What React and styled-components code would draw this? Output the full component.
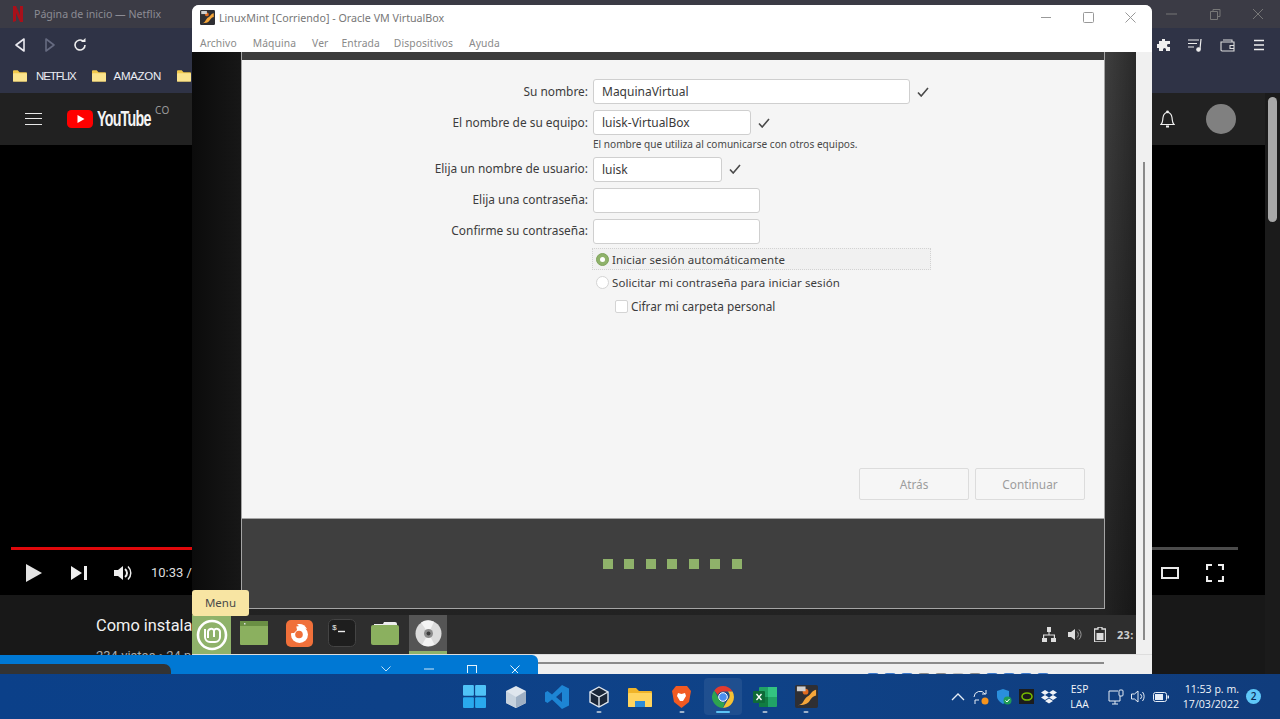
import React from 'react'
import styled, { createGlobalStyle } from 'styled-components'

const GlobalStyle = createGlobalStyle`
  html, body { margin: 0; padding: 0; width: 1280px; height: 719px; overflow: hidden; background: #181818; }
  * { box-sizing: border-box; }
  svg { display: block; flex-shrink: 0; }
`

const Screen = styled.div`
  position: relative;
  width: 1280px;
  height: 719px;
  overflow: hidden;
  display: flex;
  flex-direction: column;
  font-family: "Noto Sans", sans-serif;
`

/* ---------- browser behind the windows ---------- */
const Browser = styled.div`
  flex: 1;
  min-height: 0;
  display: flex;
  flex-direction: column;
`
const BrowserTitle = styled.div`
  height: 28px;
  background: #3b3b45;
  display: flex;
  align-items: center;
  padding: 0 0 0 13px;
  gap: 11px;
  color: #8c8c94;
  font-size: 10.6px;
`
const BrowserControls = styled.div`
  margin-left: auto;
  display: flex;
  gap: 27px;
  padding-right: 14px;
  align-items: center;
`
const Toolbar = styled.div`
  height: 65px;
  background: #2f3346;
  display: flex;
  flex-direction: column;
`
const NavRow = styled.div`
  height: 34px;
  display: flex;
  align-items: center;
  padding: 0 14px 0 13px;
  gap: 16px;
`
const NavEnd = styled.div`
  margin-left: auto;
  display: flex;
  align-items: center;
  gap: 17px;
`
const BookmarkRow = styled.div`
  height: 31px;
  display: flex;
  align-items: center;
  padding: 0 0 4px 13px;
  gap: 16px;
`
const Bookmark = styled.div`
  display: flex;
  align-items: center;
  gap: ${p => p.$gap || 8}px;
  color: #eceef4;
  font-family: "Liberation Sans", sans-serif;
  font-size: 11.5px;
  letter-spacing: ${p => p.$spacing || 0}px;
`
const PageRow = styled.div`
  flex: 1;
  min-height: 0;
  display: flex;
`
const PageMain = styled.div`
  flex: 1;
  min-width: 0;
  display: flex;
  flex-direction: column;
  background: #181818;
`
const PageScroll = styled.div`
  width: 15px;
  background: #1b1b1b;
  padding: 4px 3px 0;
`
const ScrollThumb = styled.div`
  height: 125px;
  border-radius: 5px;
  background: #a8a8a8;
`
const YtHeader = styled.div`
  height: 52px;
  background: #212121;
  display: flex;
  align-items: center;
  padding: 0 29px 0 25px;
`
const Burger = styled.div`
  width: 17px;
  height: 12px;
  border-top: 1px solid #e8e8e8;
  border-bottom: 1px solid #e8e8e8;
  position: relative;
  margin-right: 25px;
  &::after {
    content: "";
    position: absolute;
    left: 0;
    right: 0;
    top: 4px;
    height: 1px;
    background: #e8e8e8;
  }
`
const YtWord = styled.span`
  display: inline-block;
  margin-left: 4px;
  color: #f4f4f4;
  font-family: "Liberation Sans", sans-serif;
  font-size: 22px;
  font-weight: 700;
  letter-spacing: -1.2px;
  transform: scaleX(0.65);
  transform-origin: left center;
  width: 58px;
  white-space: nowrap;
`
const YtRegion = styled.span`
  align-self: flex-start;
  margin: 10px 0 0 0;
  color: #9b9b9b;
  font-size: 10px;
  letter-spacing: 0.5px;
  line-height: 14px;
`
const YtEnd = styled.div`
  margin-left: auto;
  display: flex;
  align-items: center;
  gap: 31px;
`
const Avatar = styled.div`
  width: 30px;
  height: 30px;
  border-radius: 50%;
  background: #808080;
`
const Video = styled.div`
  height: 450px;
  background: #000;
  display: flex;
  flex-direction: column;
  justify-content: flex-end;
  padding: 0 27px 0 11px;
`
const Progress = styled.div`
  height: 3px;
  background: #4b4b4b;
  margin-bottom: 5px;
`
const ProgressFill = styled.div`
  height: 100%;
  background: #e0080b;
`
const VideoControls = styled.div`
  height: 35px;
  margin-bottom: 5px;
  display: flex;
  align-items: center;
  padding-left: 15px;
  color: #dedede;
  font-family: "Roboto", sans-serif;
  font-size: 13px;
`
const VideoEnd = styled.div`
  margin-left: auto;
  display: flex;
  gap: 27px;
  align-items: center;
  padding-right: 14px;
`
const VideoInfo = styled.div`
  padding: 20px 0 0 96px;
  font-family: "Roboto", sans-serif;
`
const VideoTitle = styled.div`
  color: #f1f1f1;
  font-size: 16.4px;
  line-height: 22px;
`
const VideoMeta = styled.div`
  margin-top: 11px;
  color: #aaa;
  font-size: 13px;
  line-height: 16px;
`

/* ---------- windows, free on the desktop ---------- */
const VBoxWindow = styled.div`
  position: absolute;
  left: 192px;
  top: 5px;
  width: 960px;
  height: 669px;
  background: #f0f0f0;
  border-radius: 7px 7px 0 0;
  overflow: hidden;
  display: flex;
  flex-direction: column;
`
const VBoxTitle = styled.div`
  height: 25px;
  background: #fff;
  display: flex;
  align-items: center;
  padding: 0 16px 0 8px;
  gap: 4px;
  color: #777;
  font-size: 10.7px;
`
const VBoxControls = styled.div`
  margin-left: auto;
  display: flex;
  align-items: center;
  gap: 31px;
`
const VBoxMenu = styled.div`
  height: 22px;
  background: #fff;
  display: flex;
  align-items: center;
  padding: 4px 0 0 8px;
  gap: 16px;
  color: #8a8a8a;
  font-size: 10.3px;
`
const MenuItem = styled.span`
  letter-spacing: 0.1px;
  margin-right: ${p => p.$pull || 0}px;
`
const GuestRow = styled.div`
  height: 602px;
  display: flex;
`
const Guest = styled.div`
  width: 944px;
  display: flex;
  flex-direction: column;
  background: #0c0c0c;
`
const GuestDesk = styled.div`
  height: 563px;
  padding-left: 49px;
  background:
    linear-gradient(90deg, #0b0b0b 0, #171717 49px, transparent 49px),
    linear-gradient(90deg, rgba(0,0,0,0) 913px, rgba(0,0,0,0.35) 944px),
    linear-gradient(180deg, #3f3f3f 0, #222 100%);
`
const Installer = styled.div`
  width: 864px;
  height: 557px;
  display: flex;
  flex-direction: column;
  border: 1px solid #a5a5a5;
  border-top: 0;
`
const InstallerStrip = styled.div`
  height: 8px;
  background: #3c3c3c;
`
const InstallerBody = styled.div`
  flex: 1;
  background: #f5f5f5;
  display: flex;
  flex-direction: column;
  padding-top: 19px;
  border-bottom: 1px solid #a5a5a5;
  color: #3c3c3c;
  font-size: 11.5px;
`
const Form = styled.div`
  display: grid;
  grid-template-columns: 346px auto;
  column-gap: 5px;
  row-gap: 6px;
  justify-content: start;
`
const FieldLabel = styled.div`
  text-align: right;
  align-self: center;
  padding-bottom: 2px;
  font-size: 11.9px;
`
const FieldRow = styled.div`
  display: flex;
  align-items: center;
  gap: 7px;
`
const TextField = styled.div`
  width: ${p => p.$width}px;
  height: 25px;
  background: #fff;
  border: 1px solid #cfcfcf;
  border-radius: 3px;
  padding-left: 8px;
  line-height: 24px;
  color: #3a3a3a;
  font-size: 12px;
`
const Hint = styled.div`
  grid-column: 2;
  font-size: 10.1px;
  line-height: 11px;
  margin: -2px 0 0.5px;
  color: #484848;
`
const RadioBox = styled.div`
  grid-column: 2;
  width: 339px;
  height: 22px;
  margin: ${p => (p.$focused ? '-1.5px' : '-5px')} 0 0 -1px;
  display: flex;
  align-items: center;
  gap: 3px;
  padding-left: 3px;
  border: 1px dotted ${p => (p.$focused ? '#d2d2d2' : 'transparent')};
  background: ${p => (p.$focused ? '#f1f1f1' : 'transparent')};
  letter-spacing: 0.1px;
`
const Radio = styled.span`
  width: 13px;
  height: 13px;
  border-radius: 50%;
  background: ${p => (p.$on ? '#8fb26a' : '#fff')};
  border: 1px solid ${p => (p.$on ? '#7fa35c' : '#d4d4d4')};
  position: relative;
  &::after {
    content: "";
    display: ${p => (p.$on ? 'block' : 'none')};
    position: absolute;
    left: 3px;
    top: 3px;
    width: 5px;
    height: 5px;
    border-radius: 50%;
    background: #fff;
  }
`
const CheckRow = styled.div`
  grid-column: 2;
  display: flex;
  align-items: center;
  gap: 3px;
  padding-left: 22px;
  height: 14px;
  font-size: 11.8px;
`
const CheckBox = styled.span`
  width: 13px;
  height: 13px;
  background: #fff;
  border: 1px solid #d4d4d4;
  border-radius: 2px;
`
const InstallerButtons = styled.div`
  margin-top: auto;
  display: flex;
  justify-content: flex-end;
  gap: 6px;
  padding: 0 19px 18px 0;
`
const WizardButton = styled.div`
  width: 110px;
  height: 32px;
  border: 1px solid #dcdcdc;
  border-radius: 2px;
  background: #f6f6f6;
  color: #9d9d9d;
  display: flex;
  align-items: center;
  justify-content: center;
  font-size: 11.8px;
`
const InstallerFooter = styled.div`
  height: 89px;
  background: #3f3f3f;
  display: flex;
  align-items: center;
  justify-content: center;
  gap: 11.5px;
  padding-right: 2px;
`
const Dot = styled.span`
  width: 10px;
  height: 10px;
  background: #8fb26a;
`
const MintPanel = styled.div`
  height: 39px;
  background: #2e2e2e;
  display: flex;
  color: #cfcfcf;
`
const MintMenu = styled.div`
  width: 39px;
  background: #8fb26a;
  display: flex;
  align-items: center;
  justify-content: center;
`
const PanelIcons = styled.div`
  display: flex;
  align-items: center;
  padding-left: 2px;
`
const PanelIcon = styled.div`
  width: ${p => p.$w}px;
  height: 39px;
  display: flex;
  align-items: center;
  justify-content: center;
  background: ${p => (p.$active ? '#555' : 'transparent')};
  border-bottom: 3px solid ${p => (p.$active ? '#8fb26a' : 'transparent')};
`
const PanelTray = styled.div`
  margin-left: auto;
  display: flex;
  align-items: center;
  gap: 11px;
  font-size: 11px;
  font-weight: 700;
  letter-spacing: 0.3px;
  width: 94px;
  white-space: nowrap;
`
const Tooltip = styled.div`
  position: absolute;
  left: 0;
  top: 585px;
  width: 57px;
  height: 26px;
  padding-bottom: 1px;
  background: #f8e5a3;
  border-radius: 3px;
  color: #4a4a4a;
  font-size: 11.5px;
  display: flex;
  align-items: center;
  justify-content: center;
`
const SideStrip = styled.div`
  flex: 1;
  background: #f0f0f0;
  padding: 110px 0 14px 7px;
`
const SideBar = styled.div`
  width: 2px;
  height: 100%;
  background: #8a8a8a;
`
const VBoxStatus = styled.div`
  flex: 1;
  background: #efefef;
  padding-top: 6.5px;
  overflow: hidden;
  border-top: 1px solid #ddd;
`
const StatusLine = styled.div`
  width: 912px;
  height: 2px;
  background: #8a8a8a;
`
const StatusIcons = styled.div`
  display: flex;
  gap: 5px;
  padding: 9px 0 0 675px;
`
const StatusIcon = styled.span`
  width: 12px;
  height: 10px;
  border-radius: 3px 3px 0 0;
  background: ${p => p.$color};
`
const BlueWindow = styled.div`
  position: absolute;
  left: 0;
  top: 655px;
  width: 538px;
  height: 19px;
  background: #0078d4;
  border-radius: 0 6px 0 0;
  display: flex;
  align-items: flex-end;
`
const BlueTab = styled.div`
  width: 171px;
  height: 10px;
  background: #333;
  border-radius: 0 7px 0 0;
`
const BlueControls = styled.div`
  margin-left: auto;
  display: flex;
  align-items: center;
  gap: 33px;
  padding: 8px 18px 0 0;
  height: 19px;
`

/* ---------- windows taskbar ---------- */
const Taskbar = styled.div`
  height: 45px;
  background: linear-gradient(90deg, #0b4089 0, #0f4287 60%, #103c7c 100%);
  display: grid;
  grid-template-columns: 1fr auto 1fr;
  align-items: center;
`
const TaskApps = styled.div`
  grid-column: 2;
  display: flex;
  align-items: center;
  gap: 3.5px;
`
const TaskApp = styled.div`
  position: relative;
  width: 38px;
  height: 37px;
  border-radius: 4px;
  display: flex;
  align-items: center;
  justify-content: center;
  background: ${p => (p.$active ? 'rgba(255,255,255,0.07)' : 'transparent')};
  &::after {
    content: "";
    display: ${p => (p.$open || p.$active ? 'block' : 'none')};
    position: absolute;
    bottom: 2px;
    left: 50%;
    transform: translateX(-50%);
    width: ${p => (p.$active ? 14 : 5)}px;
    height: 2.5px;
    border-radius: 2px;
    background: ${p => (p.$active ? '#5cc4f5' : '#9fb3cc')};
  }
`
const Tray = styled.div`
  grid-column: 3;
  justify-self: end;
  display: flex;
  align-items: center;
  color: #f2f5fa;
  font-family: "Open Sans", sans-serif;
  font-size: 10.3px;
  padding-right: 19px;
`
const TrayIcons = styled.div`
  display: flex;
  align-items: center;
  gap: 7px;
`
const Lang = styled.div`
  margin: 0 19px 0 13px;
  padding-top: 1px;
  text-align: center;
  line-height: 15px;
`
const Clock = styled.div`
  margin: 0 7px 0 14px;
  padding-top: 1px;
  text-align: right;
  line-height: 15px;
  white-space: nowrap;
  font-size: 10.6px;
`
const Badge = styled.div`
  width: 15px;
  height: 15px;
  border-radius: 50%;
  background: #5fc8f8;
  color: #0b2a55;
  font-size: 10px;
  font-weight: 600;
  text-align: center;
  line-height: 15px;
`

/* ---------- drawings ---------- */
const FolderIcon = () => (
  <svg width="14" height="13" viewBox="0 0 15 13">
    <path d="M0 2a1 1 0 0 1 1-1h4l2 2h7a1 1 0 0 1 1 1v8a1 1 0 0 1-1 1H1a1 1 0 0 1-1-1z" fill="#f2c94c" />
    <rect y="4" width="15" height="9" rx="1" fill="#fbe48e" />
  </svg>
)
const Chevron = ({ dir, color }) => (
  <svg width="14" height="16" viewBox="0 0 14 16">
    <path d={dir === 'left' ? 'M11 2 3 8l8 6z' : 'M3 2l8 6-8 6z'} fill="none" stroke={color} strokeWidth="1.6" strokeLinejoin="round" />
  </svg>
)
const Check = () => (
  <svg width="12" height="10" viewBox="0 0 12 10">
    <path d="M1 5.5 4.2 9 11 1" fill="none" stroke="#4a4a4a" strokeWidth="1.6" />
  </svg>
)
const MintLogo = ({ size = 32 }) => (
  <svg width={size} height={size} viewBox="0 0 32 32" fill="none" stroke="#fff">
    <circle cx="16" cy="16" r="14" strokeWidth="2.6" />
    <path d="M9 10v8a5 5 0 0 0 5 5h5a5 5 0 0 0 5-5v-5a3.2 3.2 0 0 0-6-1.5 3.2 3.2 0 0 0-6 1.5v6" strokeWidth="2" />
    <path d="M18 12v6" strokeWidth="2" />
  </svg>
)
const CdIcon = () => (
  <svg width="27" height="27" viewBox="0 0 27 27">
    <circle cx="13.5" cy="13.5" r="13" fill="#dcdcdc" />
    <path d="M13.5 13.5 6 2.5A13 13 0 0 1 19 1.7zM13.5 13.5l6 11A13 13 0 0 1 7 24.7z" fill="#f4f4f4" />
    <circle cx="13.5" cy="13.5" r="4.5" fill="#8c8c8c" />
    <circle cx="13.5" cy="13.5" r="2" fill="#3c3c3c" />
  </svg>
)
const VBoxAppIcon = ({ size = 15 }) => (
  <svg width={size} height={size} viewBox="0 0 24 24">
    <rect width="24" height="24" rx="2" fill="#2f2f33" />
    <path d="M3 21c6 0 6-7 10-9s4-6 9-7v6c-4 1-5 3-7 6s-6 4-12 4z" fill="#f5a63a" />
    <circle cx="11" cy="7" r="3" fill="#e26b1f" />
    <rect x="2" y="1.5" width="9" height="5" fill="#cfcfcf" />
  </svg>
)
const WinIcon = () => (
  <svg width="23" height="23" viewBox="0 0 22 22">
    <rect width="10.4" height="10.4" rx="1" fill="#4fc3f7" />
    <rect x="11.6" width="10.4" height="10.4" rx="1" fill="#4fc3f7" />
    <rect y="11.6" width="10.4" height="10.4" rx="1" fill="#29a9ee" />
    <rect x="11.6" y="11.6" width="10.4" height="10.4" rx="1" fill="#29a9ee" />
  </svg>
)

const App = () => (
  <Screen>
    <GlobalStyle />
    <Browser>
      <BrowserTitle>
        <svg width="10" height="16" viewBox="0 0 10 16">
          <path d="M0 0h3l7 16H7zM0 0h3v15l-3 1zM7 0h3v16l-3-1z" fill="#a8101a" />
        </svg>
        Página de inicio — Netflix
        <BrowserControls>
          <svg width="16" height="12" viewBox="0 0 16 12"><path d="M2 6h11" stroke="#777" strokeWidth="1" /></svg>
          <svg width="16" height="12" viewBox="0 0 16 12" fill="none" stroke="#777"><path d="M3.5 3.5h7v8h-7zM6 3.5v-2h7v7h-2.5" /></svg>
          <svg width="16" height="12" viewBox="0 0 16 12"><path d="M3 1l10 10M13 1 3 11" stroke="#777" /></svg>
        </BrowserControls>
      </BrowserTitle>
      <Toolbar>
        <NavRow>
          <Chevron dir="left" color="#e9e9ef" />
          <Chevron dir="right" color="#666b80" />
          <svg width="14" height="14" viewBox="0 0 14 14" fill="none"><path d="M12 7a5 5 0 1 1-2-4" stroke="#eee" strokeWidth="1.6" /><path d="M8 4h4.5V0z" fill="#eee" /></svg>
          <NavEnd>
            <svg width="14" height="14" viewBox="0 0 14 14"><path d="M5 1h3v2h5v3h-2a1.6 1.6 0 0 0 0 3h2v4H9v-1.5a1.5 1.5 0 0 0-3 0V13H2v-3H0V6h2V3h3z" fill="#eee" /></svg>
            <svg width="15" height="14" viewBox="0 0 15 14" fill="none" stroke="#eee" strokeWidth="1.2"><path d="M0 2h11M0 5.5h9M0 9h6M13 1l-1 10" /><circle cx="10.5" cy="11.5" r="1.7" fill="#eee" /></svg>
            <svg width="15" height="13" viewBox="0 0 15 13" fill="none" stroke="#ddd" strokeWidth="1.1"><path d="M3 1h9v2M1 3h13v9H2a1 1 0 0 1-1-1zM14 6.5H10v3h4" /></svg>
            <svg width="14" height="12" viewBox="0 0 14 12"><path d="M2 1.5h10M2 6h10M2 10.5h10" stroke="#eee" strokeWidth="1.6" /></svg>
          </NavEnd>
        </NavRow>
        <BookmarkRow>
          <Bookmark $gap={9} $spacing={-1.1}><FolderIcon />NETFLIX</Bookmark>
          <Bookmark $spacing={-0.3}><FolderIcon />AMAZON</Bookmark>
          <Bookmark><FolderIcon /></Bookmark>
        </BookmarkRow>
      </Toolbar>
      <PageRow>
        <PageMain>
          <YtHeader>
            <Burger />
            <svg width="26" height="18" viewBox="0 0 26 18">
              <rect width="26" height="18" rx="4.5" fill="#f00" />
              <path d="m10.5 5 7 4-7 4z" fill="#fff" />
            </svg>
            <YtWord>YouTube</YtWord>
            <YtRegion>CO</YtRegion>
            <YtEnd>
              <svg width="15" height="19" viewBox="0 0 15 19" fill="none" stroke="#f0f0f0" strokeWidth="1.2"><path d="M1 14.5c2-1.5 1.5-4 2-7 .5-3 2.2-5 4.5-5s4 2 4.500 5c.5 3 0 5.500 2 7z" /><path d="M6 16.500h3" strokeWidth="2" /><circle cx="7.500" cy="1.800" r=".8" fill="#f0f0f0" /></svg>
              <Avatar />
            </YtEnd>
          </YtHeader>
          <Video>
            <Progress><ProgressFill style={{ width: 300 }} /></Progress>
            <VideoControls>
              <svg width="16" height="18" viewBox="0 0 16 18"><path d="M0 0l16 9L0 18z" fill="#e4e4e4" /></svg>
              <svg style={{ marginLeft: 29 }} width="16" height="16" viewBox="0 0 16 16"><path d="M0 1l11 7-11 7zM13 1h3v14h-3z" fill="#eee" /></svg>
              <svg style={{ marginLeft: 27 }} width="18" height="16" viewBox="0 0 18 16" fill="none"><path d="M0 5h4l5-4v14l-5-4H0z" fill="#eee" /><path d="M11 4a5 5 0 0 1 0 8" stroke="#eee" strokeWidth="2" /><path d="M14 1.500a9 9 0 0 1 0 13" stroke="#eee" strokeWidth="1.500" /></svg>
              <span style={{ marginLeft: 19 }}>10:33 /</span>
              <VideoEnd>
                <svg width="18" height="12" viewBox="0 0 18 12"><rect x="1" y="1" width="16" height="10" fill="none" stroke="#e8e8e8" strokeWidth="2" /></svg>
                <svg width="18" height="18" viewBox="0 0 18 18" fill="none" stroke="#eee" strokeWidth="2.200"><path d="M1 6V1h5M12 1h5v5M17 12v5h-5M6 17H1v-5" /></svg>
              </VideoEnd>
            </VideoControls>
          </Video>
          <VideoInfo>
            <VideoTitle>Como instalar Linux Mint</VideoTitle>
            <VideoMeta>234 vistas • 24 nov</VideoMeta>
          </VideoInfo>
        </PageMain>
        <PageScroll><ScrollThumb /></PageScroll>
      </PageRow>
    </Browser>

    <VBoxWindow>
      <VBoxTitle>
        <VBoxAppIcon />
        LinuxMint [Corriendo] - Oracle VM VirtualBox
        <VBoxControls>
          <svg width="11" height="11" viewBox="0 0 11 11"><path d="M0 5.500h10" stroke="#999" /></svg>
          <svg width="11" height="11" viewBox="0 0 11 11"><rect x=".5" y=".5" width="10" height="10" rx="1" fill="none" stroke="#999" /></svg>
          <svg width="11" height="11" viewBox="0 0 11 11"><path d="M.5.500l10 10M10.500.500l-10 10" stroke="#999" /></svg>
        </VBoxControls>
      </VBoxTitle>
      <VBoxMenu>
        <MenuItem>Archivo</MenuItem>
        <MenuItem>Máquina</MenuItem>
        <MenuItem $pull={-3}>Ver</MenuItem>
        <MenuItem $pull={-2}>Entrada</MenuItem>
        <MenuItem>Dispositivos</MenuItem>
        <MenuItem>Ayuda</MenuItem>
      </VBoxMenu>
      <GuestRow>
        <Guest>
          <GuestDesk>
            <Installer>
              <InstallerStrip />
              <InstallerBody>
                <Form>
                  <FieldLabel>Su nombre:</FieldLabel>
                  <FieldRow><TextField $width={317}>MaquinaVirtual</TextField><Check /></FieldRow>
                  <FieldLabel>El nombre de su equipo:</FieldLabel>
                  <FieldRow><TextField $width={158}>luisk-VirtualBox</TextField><Check /></FieldRow>
                  <Hint>El nombre que utiliza al comunicarse con otros equipos.</Hint>
                  <FieldLabel>Elija un nombre de usuario:</FieldLabel>
                  <FieldRow><TextField $width={129}>luisk</TextField><Check /></FieldRow>
                  <FieldLabel>Elija una contraseña:</FieldLabel>
                  <FieldRow><TextField $width={167} /></FieldRow>
                  <FieldLabel>Confirme su contraseña:</FieldLabel>
                  <FieldRow><TextField $width={167} /></FieldRow>
                  <RadioBox $focused><Radio $on />Iniciar sesión automáticamente</RadioBox>
                  <RadioBox><Radio />Solicitar mi contraseña para iniciar sesión</RadioBox>
                  <CheckRow><CheckBox />Cifrar mi carpeta personal</CheckRow>
                </Form>
                <InstallerButtons>
                  <WizardButton>Atrás</WizardButton>
                  <WizardButton>Continuar</WizardButton>
                </InstallerButtons>
              </InstallerBody>
              <InstallerFooter>
                {[0, 1, 2, 3, 4, 5, 6].map(i => <Dot key={i} />)}
              </InstallerFooter>
            </Installer>
          </GuestDesk>
          <MintPanel>
            <MintMenu><MintLogo /></MintMenu>
            <PanelIcons>
              <PanelIcon $w={42}>
                <svg width="28" height="24" viewBox="0 0 28 24"><rect width="28" height="24" rx="1" fill="#8bb05f" /><rect width="28" height="5" fill="#6a8f44" /><rect x="4" y="2" width="1.500" height="1.500" fill="#ddd" /></svg>
              </PanelIcon>
              <PanelIcon $w={48}>
                <svg width="27" height="27" viewBox="0 0 27 27">
                  <rect width="27" height="27" rx="5" fill="#f0703a" />
                  <circle cx="13.500" cy="14.500" r="8.500" fill="#fff" />
                  <circle cx="13" cy="14.500" r="3.800" fill="#f0703a" />
                  <path d="M4 13c0-4 3-7 6-8l1 5-3 3z" fill="#f0703a" />
                  <path d="M11 4.500c4-1.500 8 .5 10 4.500l-6-1.500z" fill="#fff" />
                </svg>
              </PanelIcon>
              <PanelIcon $w={38}>
                <svg width="28" height="28" viewBox="0 0 28 28"><rect x=".5" y=".5" width="27" height="27" rx="5" fill="#1e1e1e" stroke="#444" /><path d="M10 12.500h7" stroke="#eee" strokeWidth="1.400" /><text x="4" y="11" fontSize="8" fontFamily="Liberation Mono, monospace" fill="#eee">$</text></svg>
              </PanelIcon>
              <PanelIcon $w={48}>
                <svg width="28" height="24" viewBox="0 0 28 24"><path d="M3 3h9l1-2h11a2 2 0 0 1 2 2v2H3z" fill="#eee" /><rect y="4" width="28" height="20" rx="2" fill="#8bb05f" /></svg>
              </PanelIcon>
              <PanelIcon $active $w={38}><CdIcon /></PanelIcon>
            </PanelIcons>
            <PanelTray>
              <svg width="14" height="15" viewBox="0 0 14 15" fill="#ddd"><path d="M5 0h4v5H7.500v2.500H13V11h1v4H9v-4h2.800V8.500H2.200V11H5v4H0v-4h1V7.500h5.500V5H5z" /></svg>
              <svg width="16" height="13" viewBox="0 0 14 13" fill="none"><path d="M0 4h3l4-3v11l-4-3H0z" fill="#ddd" /><path d="M9 3.500a4 4 0 0 1 0 6M11 1.500a7 7 0 0 1 0 10" stroke="#999" /></svg>
              <svg width="12" height="15" viewBox="0 0 12 15"><path d="M4 0h4v2h3.500v13H.5V2H4z" fill="none" stroke="#ddd" strokeWidth="1.300" /><rect x="2.500" y="6" width="7" height="7" fill="#ddd" /></svg>
              <span>23:</span>
            </PanelTray>
          </MintPanel>
          <Tooltip>Menu</Tooltip>
        </Guest>
        <SideStrip><SideBar /></SideStrip>
      </GuestRow>
      <VBoxStatus>
        <StatusLine />
        <StatusIcons>
          {['#3b78c9', '#3b78c9', '#3b78c9', '#888', '#888', '#bbb', '#888', '#3b78c9', '#3b78c9', '#3b78c9', '#3b78c9'].map((c, i) => (
            <StatusIcon key={i} $color={c} />
          ))}
        </StatusIcons>
      </VBoxStatus>
    </VBoxWindow>

    <BlueWindow>
      <BlueTab />
      <BlueControls>
        <svg width="10" height="6" viewBox="0 0 10 6"><path d="M.5.500 5 5 9.500.500" fill="none" stroke="#bfe0f7" /></svg>
        <svg width="10" height="6" viewBox="0 0 10 6"><path d="M0 3h10" stroke="#cfe6f7" /></svg>
        <svg width="10" height="8" viewBox="0 0 10 8"><rect x=".5" y=".5" width="9" height="9" fill="none" stroke="#e6f2fb" /></svg>
        <svg width="10" height="8" viewBox="0 0 10 8"><path d="M.5.500l9 9M9.500.500l-9 9" stroke="#e6f2fb" /></svg>
      </BlueControls>
    </BlueWindow>

    <Taskbar>
      <TaskApps>
        <TaskApp><WinIcon /></TaskApp>
        <TaskApp>
          <svg width="20" height="22" viewBox="0 0 20 22"><path d="M10 0l10 5v12l-10 5-10-5V5z" fill="#dfe6ee" /><path d="M10 11l10-6v12l-10 5z" fill="#9fb0c4" /><path d="M10 11v11L0 17V5z" fill="#c6d2de" /></svg>
        </TaskApp>
        <TaskApp>
          <svg width="24" height="24" viewBox="0 0 24 24"><path d="M17 0l7 3.500v17L17 24 7 14.500l-4.500 3.500L0 16.500v-9L2.500 6 7 9.500zM17 7l-6 5 6 5z" fill="#1d85d4" /></svg>
        </TaskApp>
        <TaskApp $open>
          <svg width="20" height="22" viewBox="0 0 20 22" fill="none"><path d="M10 1l9 5v10l-9 5-9-5V6z" fill="#1a2638" stroke="#dfe6ee" strokeWidth="1.400" /><path d="M1 6l9 5 9-5M10 11v10" stroke="#dfe6ee" strokeWidth="1.400" /></svg>
        </TaskApp>
        <TaskApp>
          <svg width="24" height="20" viewBox="0 0 24 20"><path d="M0 2a1 1 0 0 1 1-1h7l3 3h12a1 1 0 0 1 1 1v14a1 1 0 0 1-1 1H1a1 1 0 0 1-1-1z" fill="#f0b429" /><rect y="6" width="24" height="14" rx="1" fill="#ffd45e" /><rect x="7" y="14" width="10" height="6" fill="#2b8bd8" /></svg>
        </TaskApp>
        <TaskApp $open>
          <svg width="19" height="22" viewBox="0 0 19 22"><path d="M4 0h11l4 5-2 11-7.500 6L2 16 0 5z" fill="#f15a22" /><path d="M6 7l3.500 1L13 7l1 3-3 5h-3L5 10z" fill="#fff" /></svg>
        </TaskApp>
        <TaskApp $active>
          <svg width="22" height="22" viewBox="0 0 22 22">
            <path d="M11 0a11 11 0 0 1 9.500 5.500H11a5.500 5.500 0 0 0-5.200 3.600L2.300 4.400A11 11 0 0 1 11 0z" fill="#e33b2e" />
            <path d="M20.500 5.500A11 11 0 0 1 11 22l4.800-8.200a5.500 5.500 0 0 0 0-8.300z" fill="#f7c233" />
            <path d="M11 22A11 11 0 0 1 2.300 4.400l4.700 8.500a5.500 5.500 0 0 0 5.800 3.300z" fill="#2ea44f" />
            <circle cx="11" cy="11" r="4.300" fill="#4a8ef0" stroke="#fff" strokeWidth="1" />
          </svg>
        </TaskApp>
        <TaskApp $open>
          <svg width="24" height="20" viewBox="0 0 24 20"><rect x="6" width="18" height="20" rx="1" fill="#21a366" /><rect x="15" width="9" height="10" fill="#33c481" /><rect x="6" y="10" width="9" height="10" fill="#107c41" /><rect x="0" y="4" width="12" height="12" rx="1" fill="#0e6b38" /><path d="M3.500 7l5 6M8.500 7l-5 6" stroke="#fff" strokeWidth="1.300" /></svg>
        </TaskApp>
        <TaskApp $open><VBoxAppIcon size={23} /></TaskApp>
      </TaskApps>
      <Tray>
        <TrayIcons>
          <svg width="14" height="8" viewBox="0 0 14 8" style={{ marginRight: 1 }}><path d="M1 7l6-6 6 6" fill="none" stroke="#e6edf6" strokeWidth="1.300" /></svg>
          <svg width="16" height="16" viewBox="0 0 16 16" fill="none"><path d="M1 8a6 6 0 0 1 11-3M13 1v4H9M2 15v-4h4" stroke="#e6edf6" /><circle cx="12" cy="12" r="3.500" fill="#f7941d" /></svg>
          <svg width="16" height="16" viewBox="0 0 16 16"><path d="M7 0l6 2v5c0 4-3 6-6 8-3-2-6-4-6-8V2z" fill="#2a8fdc" /><circle cx="11.500" cy="11.500" r="4" fill="#1f9d55" /><path d="M9.500 11.500l1.500 1.500 2.500-3" stroke="#fff" fill="none" /></svg>
          <svg width="15" height="15" viewBox="0 0 15 15"><rect width="15" height="15" fill="#1c1c1c" /><ellipse cx="8" cy="7.500" rx="5" ry="3.500" fill="none" stroke="#76b900" strokeWidth="1.600" /></svg>
          <svg width="16" height="14" viewBox="0 0 16 14" fill="#f0f3f8"><path d="M4 0l4 2.500L4 5 0 2.500zM12 0l4 2.500L12 5 8 2.500zM4 5l4 2.500L4 10 0 7.500zM12 5l4 2.500-4 2.500-4-2.500zM4 11l4-2.500 4 2.500-4 2.500z" /></svg>
        </TrayIcons>
        <Lang>ESP<br />LAA</Lang>
        <TrayIcons>
          <svg width="16" height="16" viewBox="0 0 16 16" fill="none" stroke="#e6edf6"><path d="M10 2H1v10h11V7M4 15h6M7 12v3" /><rect x="11" y="1" width="4" height="6" rx="1" /></svg>
          <svg width="15" height="13" viewBox="0 0 15 13" fill="none" stroke="#e6edf6"><path d="M.5 4h3L7 1v11L3.500 9h-3zM9.500 4a3.500 3.500 0 0 1 0 5M11.500 2a7 7 0 0 1 0 9" /></svg>
          <svg width="16" height="10" viewBox="0 0 16 10"><rect x=".5" y=".5" width="13" height="9" rx="2" fill="none" stroke="#e6edf6" /><rect x="2" y="2" width="8" height="6" fill="#e6edf6" /><rect x="14.500" y="3.500" width="1.500" height="3" fill="#e6edf6" /></svg>
        </TrayIcons>
        <Clock>11:53 p. m.<br />17/03/2022</Clock>
        <Badge>2</Badge>
      </Tray>
    </Taskbar>
  </Screen>
)

export default App
